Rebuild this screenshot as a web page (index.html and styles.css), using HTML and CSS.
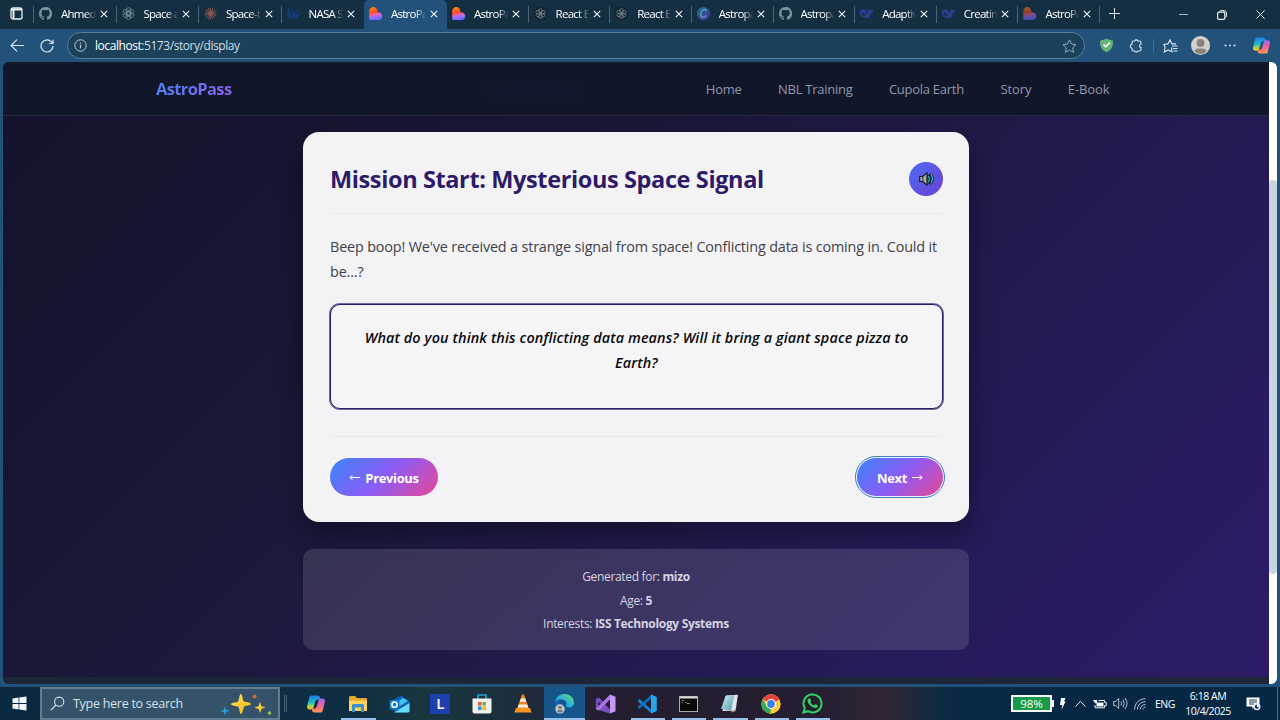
FILE: index.html
```html
<!DOCTYPE html>
<html lang="en">
<head>
<meta charset="utf-8">
<title>AstroPass</title>
<link rel="stylesheet" href="styles.css">
</head>
<body>
<svg class="defs" aria-hidden="true">
  <defs>
    <linearGradient id="g-heart" x1="0" y1="0" x2="0.2" y2="1"><stop offset="0" stop-color="#ff9800"/><stop offset=".45" stop-color="#ff4b2b"/><stop offset=".62" stop-color="#f06292"/><stop offset=".8" stop-color="#a66cff"/><stop offset="1" stop-color="#6a6cff"/></linearGradient>
    <linearGradient id="g-cop1" x1="0" y1="0" x2="0" y2="1"><stop offset="0" stop-color="#1f7ce8"/><stop offset=".5" stop-color="#27b7c9"/><stop offset=".8" stop-color="#b9d43a"/><stop offset="1" stop-color="#f2c21c"/></linearGradient>
    <linearGradient id="g-cop2" x1="0" y1="0" x2="0" y2="1"><stop offset="0" stop-color="#a06bf0"/><stop offset=".5" stop-color="#f0609c"/><stop offset="1" stop-color="#ff9a4a"/></linearGradient>
    <linearGradient id="g-canva" x1="0" y1="0" x2="1" y2="1"><stop offset="0" stop-color="#157c86"/><stop offset="1" stop-color="#4b2aa0"/></linearGradient>
    <linearGradient id="g-edge" x1="0" y1="1" x2="1" y2="0"><stop offset="0" stop-color="#1577cf"/><stop offset=".5" stop-color="#2cb5dd"/><stop offset="1" stop-color="#6be04c"/></linearGradient>
    <linearGradient id="g-star" x1="0" y1="0" x2="1" y2="1"><stop offset="0" stop-color="#ffe45c"/><stop offset="1" stop-color="#f6b50d"/></linearGradient>
    <linearGradient id="g-note" x1="0" y1="0" x2="1" y2="1"><stop offset="0" stop-color="#d8eef1"/><stop offset="1" stop-color="#4d9aab"/></linearGradient>
  </defs>
  <symbol id="x" viewBox="0 0 8 8"><path d="M.8.8 7.2 7.2M7.2.8.8 7.2" stroke="currentColor" stroke-width="1.1" fill="none"/></symbol>
  <symbol id="github" viewBox="0 0 16 16"><path fill="#7e93a0" d="M8 1a7 7 0 0 0-2.2 13.6c.4.1.5-.1.5-.3v-1.4c-2 .4-2.4-.8-2.4-.8-.3-.8-.8-1-.8-1-.6-.5.1-.4.1-.4.7 0 1.1.7 1.1.7.6 1.1 1.6.8 2 .6.1-.5.3-.8.5-.9-1.6-.2-3.2-.8-3.2-3.5 0-.8.3-1.4.7-1.9 0-.2-.3-.9.1-1.8 0 0 .6-.2 1.9.7a6.500 6.500 0 0 1 3.500 0c1.300-.9 1.900-.7 1.900-.7.4.9.1 1.600.1 1.800.5.5.7 1.100.7 1.900 0 2.700-1.600 3.300-3.200 3.500.3.2.5.6.5 1.300v1.900c0 .2.1.4.5.3A7 7 0 0 0 8 1z"/></symbol>
  <symbol id="gpt" viewBox="0 0 16 16"><g fill="none" stroke="#6d8492" stroke-width=".9"><rect x="5.600" y="1.800" width="4.800" height="8" rx="2.400"/><rect x="5.600" y="1.800" width="4.800" height="8" rx="2.400" transform="rotate(60 8 8)"/><rect x="5.600" y="1.800" width="4.800" height="8" rx="2.400" transform="rotate(120 8 8)"/><rect x="5.600" y="1.800" width="4.800" height="8" rx="2.400" transform="rotate(180 8 8)"/><rect x="5.600" y="1.800" width="4.800" height="8" rx="2.400" transform="rotate(240 8 8)"/><rect x="5.600" y="1.800" width="4.800" height="8" rx="2.400" transform="rotate(300 8 8)"/></g></symbol>
  <symbol id="claude" viewBox="0 0 16 16"><path d="M8 1.500v13M1.500 8h13M3.400 3.400l9.200 9.200M12.600 3.400l-9.200 9.200M5.500 2l5 12M10.500 2l-5 12M2 5.500l12 5M2 10.500l12-5" stroke="#8f584f" stroke-width=".9" fill="none"/></symbol>
  <symbol id="nasa" viewBox="0 0 16 16"><path d="M2.500 2.500c.5 4.500 1.500 7.500 3 10M6.500 3.500c0 3 .3 5 1 7.500M11.500 5c-1.500 1-2.500 3-3.500 5.500M1 7c1.500 4 3.500 6.500 6.500 6.300 3.500-.3 5.500-2.800 7.300-5.300-3 2.300-5 3-7.300 2.800" stroke="#143e7c" stroke-width="1.600" fill="none"/></symbol>
  <symbol id="heart" viewBox="0 0 16 16"><path fill="url(#g-heart)" d="M1.300 5.500C1.300 2.800 3.300 1 5.700 1S10 2.800 10 5.500c0 1 .4 1.500 1.400 1.500 2.200 0 3.800 1.700 3.800 3.900S13.500 15 11.300 15H2.700c-.8 0-1.400-.6-1.400-1.400z"/></symbol>
  <symbol id="react" viewBox="0 0 16 16"><circle cx="8" cy="8" r="7.200" fill="#13222e"/><g fill="none" stroke="#7b8d98" stroke-width=".9"><path d="M8 8C5.500 6.300 5.800 2.800 8 2.800S10.500 6.300 8 8zM8 8c-2.500 1.500-5.500-.2-4.700-2.300S7.300 5.200 8 8zM8 8c.5-3 4-4.200 4.900-2.200S10.600 9.600 8 8zM8 8c-.3 3-3.500 4.600-4.500 2.700S5.400 7 8 8zM8 8c2.800-1 5.200.9 4.500 2.700S8.600 11 8 8zM6.500 9.500v3.300h3V9.500"/></g></symbol>
  <symbol id="canva" viewBox="0 0 16 16"><circle cx="8" cy="8" r="7" fill="url(#g-canva)"/><path d="M10.800 5.500c.2-1.300-.5-1.900-1.500-1.900-2.300 0-4.200 2.800-4.200 5.400 0 2 .9 3.100 2.500 3.100 1.300 0 2.500-.9 3.200-2.200" fill="none" stroke="#79a9bd" stroke-width="1.100"/></symbol>
  <symbol id="whale" viewBox="0 0 16 16"><path fill="#2b3f94" d="M.7 7.200c0-2.900 2.700-4.200 5.200-3.300 1.300.5 2.500 2 3.800 2.600-.2-1.400.2-2.600 1.200-3.300.3 1 1 1.300 1.900 1.300.8 0 1.600-.4 2.300-1.100.2 2.700-.9 4.100-2.800 4.500-.1 1.900-.9 3-1.900 3.800l1.400 1c-1.700.7-3.500.4-4.600-.4C3.700 12.800.7 10.800.7 7.200z"/><path fill="#152f42" d="M2.500 7.400c1.700-.5 3.600 1 4.800 3-2.700.7-4.700-.9-4.800-3zm5.500-1a2 2 0 0 1 2 1.800L8 7.500z"/></symbol>
  <symbol id="copilot" viewBox="0 0 20 20"><path fill="url(#g-cop1)" d="M5.500 1.500h6c1.400 0 2 .8 2.400 2l.6 2H12c-1.500 0-2.300.8-2.800 2.300L7.500 13.600c-.4 1.300-1.100 1.900-2.400 1.900H3.800C1.500 15.500.6 14 1.200 11.800l2-8C3.600 2.300 4.300 1.500 5.500 1.500z"/><path fill="url(#g-cop2)" d="M14.500 18.500h-6c-1.400 0-2-.8-2.400-2l-.6-2H8c1.500 0 2.300-.8 2.800-2.300l1.700-5.800c.4-1.300 1.100-1.900 2.400-1.900h1.300c2.300 0 3.200 1.500 2.600 3.700l-2 8c-.4 1.500-1.100 2.300-2.300 2.300z"/></symbol>
  <symbol id="star4" viewBox="0 0 20 20"><path d="M10 0C11.600 0 11.500 7 13 7.500S20 8.400 20 10s-6.500 1.500-7 2.700S11.600 20 10 20s-1.500-6.500-2.800-7.200S0 11.600 0 10s6.500-1.500 7.200-2.600S8.400 0 10 0z"/></symbol>
</svg>

<header class="tabs">
  <div class="workspace"><svg width="13" height="13" viewBox="0 0 13 13"><rect x="1" y="1" width="11" height="11" rx="2" fill="none" stroke="#e8eef2" stroke-width="1.300"/><path d="M1 2.500h11M3.500 3v9" stroke="#e8eef2" stroke-width="2"/></svg></div>
  <nav class="tab-list">
    <div class="tab"><svg class="fav"><use href="#github"/></svg><span class="name">Ahmed</span><svg class="close"><use href="#x"/></svg></div>
    <div class="tab"><svg class="fav"><use href="#gpt"/></svg><span class="name">Space a</span><svg class="close"><use href="#x"/></svg></div>
    <div class="tab"><svg class="fav"><use href="#claude"/></svg><span class="name">Space-t</span><svg class="close"><use href="#x"/></svg></div>
    <div class="tab"><svg class="fav"><use href="#nasa"/></svg><span class="name">NASA S</span><svg class="close"><use href="#x"/></svg></div>
    <div class="tab active"><svg class="fav"><use href="#heart"/></svg><span class="name">AstroPa</span><svg class="close"><use href="#x"/></svg></div>
    <div class="tab plain"><svg class="fav"><use href="#heart"/></svg><span class="name">AstroPa</span><svg class="close"><use href="#x"/></svg></div>
    <div class="tab"><svg class="fav"><use href="#react"/></svg><span class="name">React E</span><svg class="close"><use href="#x"/></svg></div>
    <div class="tab"><svg class="fav"><use href="#react"/></svg><span class="name">React E</span><svg class="close"><use href="#x"/></svg></div>
    <div class="tab"><svg class="fav"><use href="#canva"/></svg><span class="name">Astropa</span><svg class="close"><use href="#x"/></svg></div>
    <div class="tab"><svg class="fav"><use href="#github"/></svg><span class="name">Astropa</span><svg class="close"><use href="#x"/></svg></div>
    <div class="tab"><svg class="fav"><use href="#whale"/></svg><span class="name">Adaptiv</span><svg class="close"><use href="#x"/></svg></div>
    <div class="tab"><svg class="fav"><use href="#whale"/></svg><span class="name">Creatin</span><svg class="close"><use href="#x"/></svg></div>
    <div class="tab"><svg class="fav dim"><use href="#heart"/></svg><span class="name">AstroPa</span><svg class="close"><use href="#x"/></svg></div>
  </nav>
  <div class="new-tab"><svg width="11" height="11" viewBox="0 0 11 11"><path d="M5.500 0v11M0 5.500h11" stroke="#dce6ec" fill="none"/></svg></div>
  <div class="window-buttons">
    <svg width="9" height="9" viewBox="0 0 9 9"><path d="M0 4.500h9" stroke="#a9b8c2"/></svg>
    <svg width="10" height="10" viewBox="0 0 10 10"><path d="M2.500 1.500C3 .7 3.500.6 4 .6h3A2.400 2.400 0 0 1 9.400 3v3c0 .8-.2 1.300-.9 1.600" fill="none" stroke="#e8eef2"/><rect x=".6" y="2.200" width="7.200" height="7.200" rx="1.500" fill="none" stroke="#f2f6f8" stroke-width="1.200"/></svg>
    <svg width="9" height="9" viewBox="0 0 9 9"><path d="M.4.4l8.200 8.200M8.600.4.4 8.600" stroke="#dce6ec"/></svg>
  </div>
</header>

<div class="toolbar">
  <svg class="back" width="14" height="13" viewBox="0 0 14 13"><path d="M14 6.500H1M7 .6 1 6.500l6 5.900" fill="none" stroke="#dbe7ef" stroke-width="1.100"/></svg>
  <svg class="reload" width="14" height="14" viewBox="0 0 14 14"><path d="M13 7a6 6 0 1 1-1.800-4.300L13 4.300M13 .8v3.700H9.300" fill="none" stroke="#dbe7ef" stroke-width="1.200"/></svg>
  <div class="address">
    <svg width="13" height="13" viewBox="0 0 13 13"><circle cx="6.500" cy="6.500" r="5.700" fill="none" stroke="#b7cad5"/><path d="M6.500 5.800v3.500M6.500 3.500v1.200" stroke="#b7cad5" stroke-width="1.200"/></svg>
    <span class="url"><b>localhost</b>:5173/story/display</span>
    <svg class="fav-star" width="15" height="14" viewBox="0 0 15 14"><path d="M7.500.9l2 4.100 4.500.6-3.300 3.200.8 4.500-4-2.100-4 2.100.8-4.500L1 5.600 5.500 5z" fill="none" stroke="#8facbd"/></svg>
  </div>
  <div class="tools">
    <svg width="15" height="15" viewBox="0 0 15 15"><path d="M7.500.8l6.500 2c0 5.500-1.200 9-6.500 11.500C2.200 11.800 1 8.300 1 2.800z" fill="#67b279"/><path d="M4.500 6.500l2.300 2.300 4.200-4.200" fill="none" stroke="#fff" stroke-width="1.500"/></svg>
    <svg class="puzzle" width="14" height="14" viewBox="0 0 14 14"><path d="M4.500 2h1.200a1.700 1.700 0 0 1 3.200 0h1.600q1.500 0 1.500 1.500v1.700c-2 .2-2 3.200 0 3.400v1.900q0 1.500-1.500 1.500H8.900a1.700 1.700 0 0 1-3.200 0H4.500Q3 12 3 10.500V9.200C.6 9 .6 5.500 3 5.300V3.500Q3 2 4.500 2z" fill="none" stroke="#dbe7ef" stroke-width="1.100"/></svg>
    <i class="rule"></i>
    <svg width="15" height="14" viewBox="0 0 15 14"><path d="M8.500 8.500 9 12.900 5.200 10.900l-4 2 .9-4.400L.9 5.500l4-.6L7 .9l1.900 4H13" fill="none" stroke="#dbe7ef" stroke-width="1.100"/><path d="M9 7h5.500M10 9.500h4.500M10.500 12h4" stroke="#dbe7ef" stroke-width="1.100"/></svg>
    <svg class="avatar" width="19" height="19" viewBox="0 0 19 19"><circle cx="9.500" cy="9.500" r="9.500" fill="#d5d0cb"/><circle cx="9.500" cy="7" r="4" fill="#8b837d"/><path d="M3.500 15.500c0-2.500 2.500-3 6-3s6 .5 6 3a8.400 8.400 0 0 1-12 0z" fill="#8b837d"/></svg>
    <svg width="12" height="3" viewBox="0 0 12 3"><path d="M.5 1.500h2M5 1.500h2M9.500 1.500h2" stroke="#dbe7ef" stroke-width="1.700"/></svg>
    <svg class="side" width="19" height="19"><use href="#copilot"/></svg>
  </div>
</div>

<main class="viewport">
  <div class="page">
    <div class="site-nav">
      <div class="brand">AstroPass</div>
      <nav class="links"><a class="home">Home</a><a class="tight">NBL Training</a><a class="tight">Cupola Earth</a><a>Story</a><a>E-Book</a></nav>
    </div>
    <div class="content">
      <section class="card">
        <div class="card-head">
          <h1>Mission Start: Mysterious Space Signal</h1>
          <div class="speak"><svg width="16" height="14" viewBox="0 0 16 14"><path d="M.7 4.500h3L8 .8v12.400L3.700 9.500h-3z" fill="#a4a7ad" stroke="#15151d" stroke-width="1.100"/><path d="M3.800 4.500v5" stroke="#333"/><ellipse cx="11.500" cy="7" rx="3.300" ry="5.500" fill="#18293b"/><path d="M9.500 4c1 1.500 1 4.500 0 6M12 2.500c1.500 2.500 1.500 6.500 0 9" fill="none" stroke="#28cbd8" stroke-width="1.100"/></svg></div>
        </div>
        <p class="story">Beep boop! We've received a strange signal from space! Conflicting data is coming in. Could it<br>be...?</p>
        <div class="question"><p>What do you think this conflicting data means? Will it bring a giant space pizza to</p><p>Earth?</p></div>
        <div class="actions">
          <button class="prev"><svg width="11" height="7" viewBox="0 0 11 7"><path d="M11 3.500H1M3.500 1 1 3.500 3.500 6" fill="none" stroke="#fff"/></svg>Previous</button>
          <button class="next">Next<svg width="11" height="7" viewBox="0 0 11 7"><path d="M0 3.500h10M7.500 1 10 3.500 7.500 6" fill="none" stroke="#fff"/></svg></button>
        </div>
      </section>
      <section class="meta">
        <p>Generated for: <b>mizo</b></p>
        <p>Age: <b>5</b></p>
        <p>Interests: <b>ISS Technology Systems</b></p>
      </section>
    </div>
    <footer class="site-footer"></footer>
  </div>
  <div class="scroll"><div class="thumb"></div></div>
</main>

<div class="taskbar">
  <div class="start"><svg width="15" height="15" viewBox="0 0 15 15"><path fill="#f2f6f8" d="M.5 2.500 6.600 1.600v5.500H.5zM7.300 1.500 14.500.5v6.600H7.300zM.5 7.900h6.100v5.500L.5 12.500zM7.300 7.900h7.200v6.600l-7.200-1z"/></svg></div>
  <div class="search">
    <svg width="15" height="15" viewBox="0 0 15 15"><circle cx="9.200" cy="5.700" r="4.600" fill="none" stroke="#d7e1e8" stroke-width="1.100"/><path d="M6 9 .8 14.200" stroke="#d7e1e8" stroke-width="1.200"/></svg>
    <span>Type here to search</span>
    <svg class="sparkles" width="54" height="24" viewBox="0 0 54 24"><g fill="url(#g-star)"><use href="#star4" x="12" y="2" width="20" height="20"/><use href="#star4" x="36" y="10" width="10" height="11"/></g><use href="#star4" x="2" y="15" width="8" height="8" fill="#24a0e0"/><circle cx="35.500" cy="4.500" r="2" fill="#d4663c"/><circle cx="50.500" cy="21" r="1.800" fill="#81c650"/></svg>
  </div>
  <i class="grip"></i>
  <div class="apps">
    <div class="app"><svg width="20" height="20"><use href="#copilot"/></svg></div>
    <div class="app open"><svg width="20" height="20" viewBox="0 0 20 20"><path fill="#e7a92c" d="M1 3.500C1 2.500 1.500 2 2.500 2h4.800l1.500 2h9c.8 0 1.200.5 1.200 1.200V9H1z"/><path fill="#fbd45d" d="M1 6.500h18V17H1z"/><path fill="#3f8ecb" d="M4 18v-6.500c0-.8.700-1.500 1.500-1.500h9c.8 0 1.500.7 1.500 1.500V18h-3v-4.500H7V18z"/></svg></div>
    <div class="app"><svg width="21" height="20" viewBox="0 0 21 20"><path fill="#1060af" d="M4 6 12 1.500 20.500 7v10c0 1-.6 1.500-1.500 1.500H7L4 16z"/><path fill="#3fc5f1" d="M7 9l7-5 5 3-10 6z"/><path fill="#67dcf7" d="M5 18.500 20.500 9v7.800c0 1-.8 1.700-1.800 1.700z"/><rect x=".5" y="6" width="10" height="9.500" rx="1.500" fill="#127bd1"/><circle cx="5.500" cy="10.700" r="2.600" fill="none" stroke="#fff" stroke-width="1.500"/></svg></div>
    <div class="app"><div class="letter">L</div></div>
    <div class="app"><svg width="20" height="20" viewBox="0 0 20 20"><path d="M6 5V1h8v4" fill="none" stroke="#21a4dd" stroke-width="1.600"/><path fill="#f2f0ee" d="M.5 4.500h19v12.800c0 1.400-.9 2.200-2.200 2.200H2.700c-1.300 0-2.200-.8-2.200-2.200z"/><path fill="#e6583c" d="M6 8h3.600v3.600H6z"/><path fill="#76b441" d="M10.400 8H14v3.600h-3.600z"/><path fill="#2496d1" d="M6 12.400h3.600V16H6z"/><path fill="#f3b52a" d="M10.400 12.400H14V16h-3.600z"/></svg></div>
    <div class="app"><svg width="18" height="19" viewBox="0 0 18 19"><path fill="#f48613" d="M8 .5h2l5 14.500H3z"/><path fill="#f3eee9" d="m6.900 4.500 4.200 0 1.100 3.200H5.700zM4.700 10.500h8.600l1 3H3.700z"/><path fill="#f79422" d="M2 14h14l1.700 4.500H.3z"/></svg></div>
    <div class="app current open"><svg width="21" height="21" viewBox="0 0 21 21"><path fill="url(#g-edge)" d="M1 10C1 4.500 5.200 1 10.500 1 16 1 20 5 20 9.500c0 3.200-2.400 5-5 5-2.200 0-3.400-.8-3.300-1.700.1-.9.800-1.300.8-2.600C12.500 8 10 6.500 7.500 6.500 4.500 6.500 1.500 8 1 10z"/><path fill="#1565b7" d="M1 10c.7-2.500 3-3.600 6-3.500-2 2-2.500 4.500-1.800 7.500.6 2.500 3.500 5.500 7.500 5C5.500 21 .7 16.500 1 10z"/><circle cx="6" cy="16" r="4.700" fill="#c6cbd0"/><circle cx="6" cy="14.500" r="1.800" fill="#747b82"/><path d="M3 18.500c.2-2.300 5.800-2.300 6 0-1.500 1.500-4.500 1.500-6 0z" fill="#747b82"/></svg></div>
    <div class="app"><svg width="21" height="20" viewBox="0 0 21 20"><path fill="#7b4fc0" d="M.8 5 4 3.500 15 15.500v4L3.700 16 .8 15z"/><path fill="#251e31" d="M3.500 7.500 6 10l-2.500 2.500z"/><path fill="#a775e6" d="M15 .5v5L4 16.500.8 15z"/><path fill="#c497f4" d="M15 .5l5.500 2.300v14.400L15 19.500z"/></svg></div>
    <div class="app open"><svg width="20" height="20" viewBox="0 0 20 20"><path d="M1.500 6 14.500 17.500" stroke="#1686cf" stroke-width="2.800"/><path d="M1.500 14 14.500 2.500" stroke="#0d70b6" stroke-width="2.800"/><path fill="#29a4e8" d="M14 .3 19.800 3v14L14 19.700z"/></svg></div>
    <div class="app open"><svg width="19" height="16" viewBox="0 0 19 16"><rect x=".5" y=".5" width="18" height="15" fill="#0b0b0b" stroke="#a9abad"/><path d="M1 1.500h17" stroke="#dadada" stroke-width="2"/><path d="M2.500 4.500h2.500M3 6.500h1M6 6.500h1l1 1h3" stroke="#a5a5a5" stroke-width=".8"/></svg></div>
    <div class="app open"><svg width="19" height="19" viewBox="0 0 19 19"><path fill="#dfe7e9" d="M6 1.500 18 .8l-2.500 16-13 .2z"/><path fill="url(#g-note)" d="M5.500 2 14.500 1l-3.500 15.500L1 15z"/><path fill="#bd9a71" d="m11 17.500 4.500-1.500 2-9-2 10-3 1.500z"/></svg></div>
    <div class="app open"><svg width="20" height="20" viewBox="0 0 20 20"><circle cx="10" cy="10" r="9.700" fill="#ffcb3d"/><path fill="#e5443a" d="M10 10 1.600 5.200a9.700 9.700 0 0 1 16.800 0z"/><path fill="#e5443a" d="M10 5.200h8.400L10 10 5.800 12.500z"/><path fill="#35a853" d="M1.600 5.200 5.900 12.500 10 14.500l-.8 5.200A9.700 9.700 0 0 1 1.600 5.200z"/><path fill="#ffcb3d" d="M14.200 12.400 10 19.700l-.8 0L12 13z"/><circle cx="10" cy="10" r="4.900" fill="#fff"/><circle cx="10" cy="10" r="3.900" fill="#3c7eea"/></svg></div>
    <div class="app open"><svg width="21" height="21" viewBox="0 0 21 21"><path d="M1.500 19.500 2.800 15A9 9 0 1 1 6 18.200z" fill="none" stroke="#30d366" stroke-width="2"/><path fill="#30d366" d="M6.700 5.600c.5-.6 1.300-.5 1.600.1l.8 1.700c.2.500-.5 1.100-.8 1.500.9 1.800 2 2.800 3.800 3.500.4-.4 1-1.300 1.500-1.100l1.900.9c.8.4.2 1.700-.4 2.200-2.500 2-9.700-2.600-9.500-6.700 0-.8.5-1.600 1.100-2.100z"/></svg></div>
  </div>
  <div class="tray">
    <div class="battery">98%</div>
    <svg class="bolt" width="7" height="12" viewBox="0 0 7 12"><path fill="#fff" d="M2 0h4.500L5 3.500h1.500L2.500 12l.8-5H1z"/></svg>
    <svg class="caret" width="11" height="6" viewBox="0 0 11 6"><path d="m.5 5.500 5-5 5 5" fill="none" stroke="#e5ebef"/></svg>
    <svg class="plug" width="14" height="10" viewBox="0 0 14 10"><path d="M5.500 1.500h6v1.800h1.700v3.400h-1.700v2.100H2V6" fill="none" stroke="#f3f6f8"/><path fill="#f3f6f8" d="M3.500 3.500H10.500V7.500H3.500zM0 1h4v3.200H2z"/></svg>
    <svg class="sound" width="15" height="13" viewBox="0 0 15 13"><path d="M.7 4.500h2l3-3v10l-3-3h-2zM8 4.500q1.300 2 0 4M10 2.700q2.600 3.800 0 7.600M12 1q4 5.500 0 11" fill="none" stroke="#cbd5dc" stroke-width=".9"/></svg>
    <svg class="wifi" width="12" height="12" viewBox="0 0 12 12"><path d="M.6 11.400C.8 5 5 1 11.500.7M3.400 11.400c.2-4.500 3.500-7.500 8.100-7.800M6.200 11.400c.2-3 2.500-4.800 5.300-5M9 11.400c.1-1.500 1-2.200 2.500-2.300" fill="none" stroke="#b8c5ce"/></svg>
    <span class="lang">ENG</span>
    <div class="clock"><span>6:18 AM</span><span>10/4/2025</span></div>
    <svg class="notice" width="15" height="14" viewBox="0 0 15 14"><path fill="#fff" d="M.5.5h13v9H9L6.500 12v-2.500h-6z"/><path d="M3 3h8M3 5h8M3 7h5" stroke="#15395a"/><circle cx="11" cy="9.700" r="3.500" fill="#e7edf2"/><path d="M11 7.500a2.200 2.200 0 1 0 2 3A2 2 0 0 1 11 7.500z" fill="#15395a"/></svg>
    <i class="edge"></i>
  </div>
</div>
</body>
</html>
```

FILE: styles.css
```css
* { box-sizing: border-box; }
body { margin: 0; width: 1280px; height: 720px; overflow: hidden; display: flex; flex-direction: column; background: #22527a; font-family: "Open Sans", "Noto Sans", sans-serif; color: #fff; }
.defs { position: absolute; width: 0; height: 0; }
p, h1 { margin: 0; }
svg { display: block; flex: none; }

/* Tab strip */
.tabs { height: 29px; flex: none; display: flex; background: #152f42; }
.workspace { width: 34px; padding: 7px 0 0 10px; }
.tab-list { width: 1066px; display: grid; grid-template-columns: repeat(4, 82.5px) 83px repeat(8, 1fr); }
.tab { display: flex; align-items: center; padding: 0 9px 2px 4px; position: relative; font-size: 11.500px; letter-spacing: -.75px; }
.tab::before { content: ""; position: absolute; left: -1px; top: 6px; width: 1px; height: 17px; background: #4b6373; }
.tab:last-child::after { content: ""; position: absolute; right: 0; top: 6px; width: 1px; height: 17px; background: #4b6373; }
.fav { width: 15px; height: 15px; }
.fav.dim { opacity: .55; }
.name { flex: 1; margin: 0 1px 0 8px; white-space: nowrap; -webkit-mask-image: linear-gradient(90deg, #000 64%, transparent 93%); mask-image: linear-gradient(90deg, #000 64%, transparent 93%); }
.close { width: 8px; height: 8px; color: #f2f6f8; }
.tab.active { background: #22527a; border-radius: 5px 5px 0 0; }
.tab.active::before, .tab.plain::before { display: none; }
.new-tab { padding: 8px 0 0 9px; width: 79px; }
.window-buttons { display: flex; align-items: center; gap: 29px; }

/* Toolbar */
.toolbar { height: 33px; flex: none; display: flex; align-items: center; background: #22527a; }
.back { margin-left: 10px; }
.reload { margin-left: 16px; }
.address { width: 1018px; height: 27px; margin-left: 13px; border: 1px solid #5a829b; border-radius: 14px; background: #1c415a; display: flex; align-items: center; padding: 0 7px 0 6px; }
.url { flex: 1; margin-left: 8px; font-size: 12px; letter-spacing: -.44px; color: #d0dce4; }
.url b { font-weight: 400; color: #fff; }
.tools { display: flex; align-items: center; margin-left: 14px; gap: 14px; }
.puzzle { margin-left: 1px; }
.avatar { margin-left: -1px; }
.side { margin-left: 2px; }
.rule { width: 1px; height: 13px; background: #466f8e; margin: 0 -5px 0 -4px; }

/* Page */
.viewport { width: 1274px; height: 622px; flex: none; margin-left: 3px; display: flex; border-radius: 6px; overflow: hidden; }
.page { flex: 1; display: flex; flex-direction: column; background: linear-gradient(135deg, #14122b 0%, #191837 35%, #221a4d 62%, #2d1b69 100%); }
.site-nav { height: 54px; flex: none; border-bottom: 1px solid #232941; background: radial-gradient(ellipse 80px 18px at 530px 29px, #11182f, transparent), #111629; display: flex; justify-content: space-between; align-items: center; padding: 0 159.500px 0 153px; }
.brand { font-size: 16.500px; font-weight: 700; letter-spacing: -.63px; background: linear-gradient(90deg, #4b83f0, #8a5ff0); -webkit-background-clip: text; background-clip: text; color: transparent; }
.links { display: flex; gap: 36.500px; font-size: 13px; color: #8f98ad; letter-spacing: -.1px; }
.home { letter-spacing: -.25px; }
.tight { letter-spacing: -.27px; }
.content { flex: 1; display: flex; flex-direction: column; align-items: center; padding-top: 16px; }
.card { width: 666px; height: 390px; border-radius: 16px; background: #f3f3f6; padding: 27px; padding-right: 26px; box-shadow: 0 10px 24px rgba(5, 6, 18, .45); }
.card-head { height: 55px; display: flex; justify-content: space-between; border-bottom: 1px solid #eaeaed; }
h1 { font-size: 23.500px; line-height: 40px; font-weight: 700; color: #2d1b69; letter-spacing: -.38px; white-space: nowrap; }
.speak { width: 34px; height: 34px; margin-top: 3px; padding-left: 1px; border-radius: 50%; background: linear-gradient(135deg, #4d6cf3, #6b41d4); display: flex; align-items: center; justify-content: center; }
.story { margin-top: 21px; font-size: 14.400px; line-height: 24.500px; color: #414147; white-space: nowrap; letter-spacing: -.165px; }
.question { height: 105px; margin-top: 20px; border: 1px solid #2d1b69; box-shadow: 0 0 0 1px rgba(45, 27, 105, .65); border-radius: 10px; background: #f5f5f8; padding-top: 20px; text-align: center; color: #08080a; font-style: italic; font-weight: 600; font-size: 14.400px; line-height: 25px; letter-spacing: .12px; white-space: nowrap; }
.actions { margin-top: 27px; padding-top: 21px; border-top: 1px solid #eaeaed; display: flex; justify-content: space-between; }
button { height: 38px; border: 0; border-radius: 19px; display: flex; align-items: center; justify-content: center; gap: 5px; padding: 1px 0 0; font: 700 13px "Open Sans", "Noto Sans", sans-serif; letter-spacing: -.35px; color: #fff; background: linear-gradient(135deg, #4380f8 5%, #8b5cf6 50%, #df499e 95%); }
.prev { width: 108px; }
.next { width: 86px; outline: 1.500px solid #3b7fc4; outline-offset: 1.500px; }
.meta { width: 666px; height: 101px; margin-top: 27px; border-radius: 10px; background: rgba(255, 255, 255, .12); padding-top: 16px; text-align: center; color: #d6d3e2; font-size: 12px; line-height: 23.700px; letter-spacing: -.32px; }
.site-footer { height: 7px; flex: none; background: #1c2638; }
.scroll { width: 8px; background: #fff; padding-top: 118px; }
.thumb { width: 8px; height: 394px; border-radius: 4px; background: #c8d6e0; }

/* Taskbar */
.taskbar { height: 34px; margin-top: 2px; border-top: 1px solid #22527a; display: flex; background: linear-gradient(90deg, #09293f 0%, #0d2d42 22%, #102e42 28%, #18363f 33%, #1c2e3c 40%, #251e31 47%, #251e31 64%, #302634 69%, #0a2a44 74%, #062844 82%, #062844 100%); }
.start { width: 40px; padding: 9px 0 0 12px; }
.search { width: 240px; height: 33px; border: 2px solid #617d90; background: #34536a; display: flex; align-items: center; padding-left: 8px; font-size: 12.500px; letter-spacing: -.27px; color: #d8e1e7; }
.search span { flex: 1; margin-left: 8px; white-space: nowrap; }
.sparkles { margin-right: 5px; }
.grip { width: 3px; height: 17px; margin: 8px 9px 0 4px; border: solid #466274; border-width: 0 1px; }
.apps { display: flex; }
.app { width: 41.350px; height: 33px; display: flex; align-items: center; justify-content: center; position: relative; }
.app svg, .letter { margin-right: .6px; }
.app.open::after { content: ""; position: absolute; bottom: 0; left: 4px; right: 3px; height: 2px; background: #96bfe9; }
.app.current { background: #16548a; }
.app.current.open::after { left: 0; right: 0; }
.letter { width: 20px; height: 20px; background: #1e40af; font-size: 15px; line-height: 19px; font-weight: 600; text-align: center; }
.tray { margin-left: auto; display: flex; align-items: center; }
.battery { width: 41px; height: 17px; border: 2px solid #f5f8f7; background: #179b48; font-size: 11.500px; line-height: 13px; text-align: center; position: relative; }
.battery::after { content: ""; position: absolute; right: -4px; top: 3px; width: 2px; height: 7px; background: #f5f8f7; }
.bolt { margin-left: 7px; }
.caret { margin-left: 9px; }
.plug { margin-left: 7px; }
.sound { margin-left: 6px; }
.wifi { margin-left: 6px; }
.lang { margin-left: 9px; width: 20px; font-size: 10.500px; letter-spacing: -.5px; }
.clock { margin-left: 10px; width: 46px; display: flex; flex-direction: column; align-items: center; font-size: 10.500px; line-height: 15px; letter-spacing: -.45px; white-space: nowrap; }
.notice { margin-left: 15px; }
.edge { width: 1px; height: 33px; margin: 0 2px 0 16px; background: #4f7088; }
```
